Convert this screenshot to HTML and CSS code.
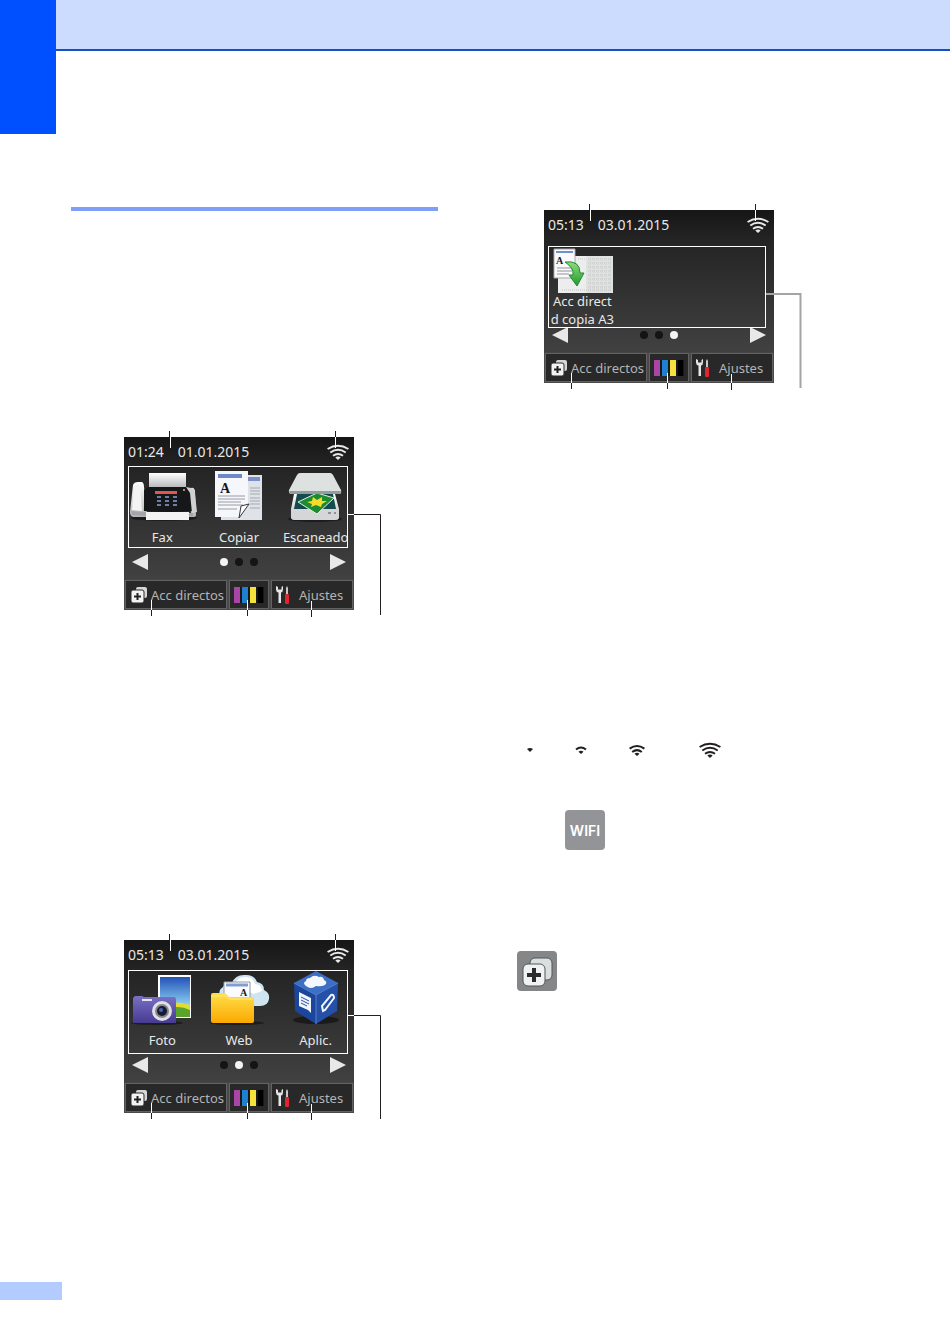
FILE: index.html
```html
<!DOCTYPE html>
<html lang="es">
<head>
    <meta charset="utf-8">
    <title>Pantalla LCD</title>
    <link rel="stylesheet" href="styles.css">
</head>
<body>
    <!-- shared icons -->
    <svg class="sprite" aria-hidden="true">
        <defs>
            <linearGradient id="silver" x1="0" y1="0" x2="0" y2="1">
                <stop offset="0" stop-color="#ffffff"/>
                <stop offset="1" stop-color="#b4b6b8"/>
            </linearGradient>
            <linearGradient id="yellow" x1="0" y1="0" x2="0" y2="1">
                <stop offset="0" stop-color="#ffdf4a"/>
                <stop offset="1" stop-color="#fba900"/>
            </linearGradient>
            <linearGradient id="purple" x1="0" y1="0" x2="0" y2="1">
                <stop offset="0" stop-color="#7a70c4"/>
                <stop offset="1" stop-color="#463a92"/>
            </linearGradient>
            <linearGradient id="sky" x1="0" y1="0" x2="0" y2="1">
                <stop offset="0" stop-color="#2452b8"/>
                <stop offset="1" stop-color="#8fd4f4"/>
            </linearGradient>
            <linearGradient id="green" x1="0" y1="0" x2="0" y2="1">
                <stop offset="0" stop-color="#8fdc7c"/>
                <stop offset="1" stop-color="#1e9a2c"/>
            </linearGradient>
        </defs>
        <symbol id="wifi" viewBox="0 0 22 16">
            <g fill="none" stroke="currentColor" stroke-width="2">
                <path d="M.600 5Q11-1.600 21.400 5"/>
                <path d="M3.300 8.500Q11 3.200 18.700 8.500"/>
                <path d="M6 11.800Q11 8.200 16 11.800"/>
            </g>
            <path d="M8.300 13.600Q11 11.400 13.700 13.600L11 16Z" fill="currentColor"/>
        </symbol>
        <symbol id="shortcut" viewBox="0 0 18 18">
            <rect x="6" y="1" width="11" height="11" rx="2" fill="#d6d6d6"/>
            <rect x="1" y="4" width="13" height="13" rx="2" fill="#f2f2f2" stroke="#2a2a2a"/>
            <path d="M7.500 7v7M4 10.500h7" stroke="#222" stroke-width="2"/>
        </symbol>
        <symbol id="ink" viewBox="0 0 30 16">
            <rect width="30" height="16" fill="#181818"/>
            <rect width="6" height="16" fill="#a945a5"/>
            <rect x="8" width="6" height="16" fill="#1f80d0"/>
            <rect x="16" width="6" height="16" fill="#f6e13c"/>
            <rect x="24" width="5" height="16" fill="#000"/>
        </symbol>
        <symbol id="tools" viewBox="0 0 14 18">
            <path d="M0 0v3.500Q0 6 2.500 6.500V17h2.500V6.500Q7 6 7 3.500V0L5.500 1v2.500h-3.500V1Z" fill="#e6e6e6"/>
            <path d="M11 0l1 2v6h-2V2Z" fill="#c8c8c8"/>
            <rect x="9" y="8" width="4" height="10" rx="1" fill="#e02430"/>
        </symbol>
        <symbol id="left" viewBox="0 0 17 16">
            <path d="M16 0V16L0 8Z" fill="#e8e8e8"/>
        </symbol>
        <symbol id="right" viewBox="0 0 17 16">
            <path d="M1 0V16L17 8Z" fill="#e8e8e8"/>
        </symbol>
    </svg>

    <header class="header">
        <div class="header-tab"></div>
        <div class="header-bar"></div>
    </header>

    <main class="content">
        <div class="column">
            <hr class="rule">

            <figure class="figure figure-home1">
                <div class="lcd">
                    <div class="status">
                        <span class="time">01:24</span>
                        <span class="date">01.01.2015</span>
                        <svg class="signal" width="22" height="16"><use href="#wifi"/></svg>
                    </div>
                    <div class="menu">
                        <a class="item" href="#fax">
                            <svg class="pic" viewBox="0 0 76 60">
                                <ellipse cx="40" cy="52" rx="33" ry="3" fill="#1c1c1c"/>
                                <path d="M25 7H62V22H25Z" fill="url(#silver)"/>
                                <path d="M6 46L9 19Q10 16 14 16H18Q20 17 20 21L23 46L67 47V22Q70 21 71 25L72 49Q72 51 69 51H9Q6 50 6 46Z" fill="url(#silver)"/>
                                <path d="M24 21H63Q66 22 67 26L69 45Q45 47 20 45V24Z" fill="#161719"/>
                                <path d="M62 21L67 22Q71 22 71 28L73 46L68 47L66 27Z" fill="#d0d1d3"/>
                                <path d="M8 44L10 21Q13 18 16 20L18 45Z" fill="#f4f4f4"/>
                                <path d="M31 25H53V28H31Z" fill="#e15555"/>
                                <path d="M33 31H37M41 31H45M49 31H53M33 35H37M41 35H45M49 35H53M33 39H37M41 39H45M49 39H53" stroke="#6e7fa6" stroke-width="2"/>
                                <circle cx="60" cy="24" r="1" fill="#e8b080"/>
                                <path d="M7 45L20 46L69 47V50Q40 52 8 49Z" fill="#a4a5a8"/>
                                <path d="M22 46H65V54H22Z" fill="#f4f4f4"/>
                            </svg>
                            <span class="label">Fax</span>
                        </a>
                        <a class="item" href="#copiar">
                            <svg class="pic" viewBox="0 0 76 60">
                                <path d="M28 9H61V54H20V50H28Z" fill="#dfe2e8"/>
                                <path d="M47 11H59V15H47Z" fill="#7d8fc9"/>
                                <path d="M49 22H59M49 25H59M49 28H59M49 32H59M49 35H59M49 38H59M49 42H59" stroke="#a4a8b0"/>
                                <path d="M14 5H47V40L38 51H14Z" fill="#f6f7fa"/>
                                <path d="M17 8H41V12H17Z" fill="#7186ca"/>
                                <text class="glyph" x="19" y="27">A</text>
                                <path d="M17 30H44M17 33H44M17 36H40M17 39H42M17 43H36" stroke="#989ca6"/>
                                <path d="M38 52L40 40L48 38Z" fill="#fff" stroke="#33363c"/>
                            </svg>
                            <span class="label">Copiar</span>
                        </a>
                        <a class="item" href="#escaneado">
                            <svg class="pic" viewBox="0 0 76 60">
                                <ellipse cx="37" cy="53" rx="27" ry="3" fill="#1c1c1c"/>
                                <path d="M16 28H57L61 43V51Q61 54 57 54H17Q13 54 13 51V43Z" fill="url(#silver)"/>
                                <path d="M19 28H55L58 43H16Z" fill="#134b4f"/>
                                <path d="M13 43H61V51Q61 54 57 54H17Q13 54 13 51Z" fill="#d4d6d8"/>
                                <path d="M20 36L39 27L56 32L39 48Z" fill="#1d8c31" stroke="#e3efe3"/>
                                <path d="M29 36L34 35L35 31L39 34L44 31L44 35L49 35L44 38L43 41L38 39L33 41L34 38Z" fill="#f4dc2c"/>
                                <path d="M50 47H53M56 47H58" stroke="#546"/>
                                <path d="M22 7H52Q54 7 55 9L63 24Q64 28 61 28H14Q10 28 11 24L19 9Q20 7 22 7Z" fill="#dde2e0"/>
                                <path d="M11 25H63Q63 28 61 28H14Q11 28 11 25Z" fill="#959c9a"/>
                            </svg>
                            <span class="label">Escaneado</span>
                        </a>
                    </div>
                    <div class="nav">
                        <button class="arrow" aria-label="Anterior"><svg width="17" height="16"><use href="#left"/></svg></button>
                        <div class="dots"><i class="dot on"></i><i class="dot"></i><i class="dot"></i></div>
                        <button class="arrow" aria-label="Siguiente"><svg width="17" height="16"><use href="#right"/></svg></button>
                    </div>
                    <div class="bar">
                        <button class="key"><svg width="18" height="18"><use href="#shortcut"/></svg>Acc directos</button>
                        <button class="key key-ink" aria-label="Tinta"><svg width="30" height="16"><use href="#ink"/></svg></button>
                        <button class="key key-set"><svg width="14" height="18"><use href="#tools"/></svg>Ajustes</button>
                    </div>
                </div>
                <svg class="callouts" viewBox="0 0 258 186">
                    <path class="out" d="M45.500 0V6M211.500 0V6M27.500 179V185M123.500 179V185M187.500 179V186M230 83.500H256.500V184"/>
                    <path class="in" d="M46.500 6V17M211.500 6V17M27.500 169V179M123.500 169V179M187.500 170V179M223 83.500H230"/>
                    <rect class="in" x="4.500" y="35.500" width="219" height="81"/>
                </svg>
            </figure>

            <figure class="figure figure-home2">
                <div class="lcd">
                    <div class="status">
                        <span class="time">05:13</span>
                        <span class="date">03.01.2015</span>
                        <svg class="signal" width="22" height="16"><use href="#wifi"/></svg>
                    </div>
                    <div class="menu">
                        <a class="item" href="#foto">
                            <svg class="pic" viewBox="0 0 76 60">
                                <ellipse cx="33" cy="54" rx="26" ry="2" fill="#1c1c1c"/>
                                <path d="M34 6H67V49H34Z" fill="#fff"/>
                                <path d="M36 8H66V37H36Z" fill="url(#sky)"/>
                                <path d="M36 35Q50 31 66 36V48H36Z" fill="#e3dc28"/>
                                <path d="M36 43Q52 34 66 41V48H36Z" fill="#5aa32c"/>
                                <path d="M9 29L11 27H18L20 28H50Q52 28 52 31V54H9Z" fill="url(#purple)"/>
                                <path d="M18 31H28" stroke="#e5e3f4" stroke-width="2"/>
                                <circle cx="38" cy="42" r="10" fill="#e0e0e4"/>
                                <circle cx="38" cy="42" r="7" fill="#85858f"/>
                                <circle cx="38" cy="42" r="5" fill="#181a30"/>
                                <circle cx="37" cy="41" r="2" fill="#4a64b0"/>
                            </svg>
                            <span class="label">Foto</span>
                        </a>
                        <a class="item" href="#web">
                            <svg class="pic" viewBox="0 0 76 60">
                                <ellipse cx="36" cy="54" rx="27" ry="2" fill="#1c1c1c"/>
                                <path d="M20 28Q16 22 22 18Q24 13 31 14Q34 6 43 6Q53 5 56 13Q63 14 63 21Q69 24 68 30Q67 37 59 37H44Z" fill="#cfe6f0"/>
                                <path d="M34 14Q38 7 45 8Q52 8 54 15Q61 16 61 22L52 25L45 20Z" fill="#fff"/>
                                <path d="M23 13H49V34H23Z" fill="#fbfbfd" stroke="#8f9aa8"/>
                                <path d="M25 16H47" stroke="#7f9ed6" stroke-width="3"/>
                                <text class="glyph glyph-small" x="39" y="27">A</text>
                                <path d="M10 26Q10 24 12 24H24L28 28H51Q53 28 53 30V52Q53 54 51 54H12Q10 54 10 52Z" fill="url(#yellow)"/>
                                <path d="M11 27H25L29 30H52" fill="none" stroke="#ffeb84"/>
                            </svg>
                            <span class="label">Web</span>
                        </a>
                        <a class="item" href="#aplic">
                            <svg class="pic" viewBox="0 0 76 60">
                                <ellipse cx="38" cy="51" rx="23" ry="4" fill="#1a1a1a"/>
                                <path d="M38 2L60 14L38 26L16 14Z" fill="#3d6fc6"/>
                                <path d="M16 14L38 26V55L17 42Z" fill="#1c469c"/>
                                <path d="M60 14L38 26V55L59 42Z" fill="#2450a8"/>
                                <path d="M16 14L38 26L60 14M38 26V55" fill="none" stroke="#5580cc"/>
                                <path d="M28 17Q24 14 28 12Q28 9 32 9Q36 5 41 8Q45 7 46 11Q50 13 47 16Q43 18 38 17Q33 21 28 17Z" fill="#f4f7fc"/>
                                <path d="M21 23L33 29V44L30 41L21 37Z" fill="#f1f4fb"/>
                                <path d="M23 28L31 32M23 31L31 35M23 34L29 37" stroke="#2450a8"/>
                                <path d="M45 42L44 37L53 26Q56 25 56 29L47 41Z" fill="none" stroke="#f1f4fb" stroke-width="2"/>
                            </svg>
                            <span class="label">Aplic.</span>
                        </a>
                    </div>
                    <div class="nav">
                        <button class="arrow" aria-label="Anterior"><svg width="17" height="16"><use href="#left"/></svg></button>
                        <div class="dots"><i class="dot"></i><i class="dot on"></i><i class="dot"></i></div>
                        <button class="arrow" aria-label="Siguiente"><svg width="17" height="16"><use href="#right"/></svg></button>
                    </div>
                    <div class="bar">
                        <button class="key"><svg width="18" height="18"><use href="#shortcut"/></svg>Acc directos</button>
                        <button class="key key-ink" aria-label="Tinta"><svg width="30" height="16"><use href="#ink"/></svg></button>
                        <button class="key key-set"><svg width="14" height="18"><use href="#tools"/></svg>Ajustes</button>
                    </div>
                </div>
                <svg class="callouts" viewBox="0 0 258 186">
                    <path class="out" d="M45.500 0V6M211.500 0V6M27.500 179V185M123.500 179V185M187.500 179V186M230 81.500H256.500V185"/>
                    <path class="in" d="M46.500 6V17M211.500 6V17M27.500 169V179M123.500 169V179M187.500 170V179M223 81.500H230"/>
                    <rect class="in" x="4.500" y="36.500" width="219" height="83"/>
                </svg>
            </figure>
        </div>

        <div class="column">
            <figure class="figure">
                <div class="lcd">
                    <div class="status">
                        <span class="time">05:13</span>
                        <span class="date">03.01.2015</span>
                        <svg class="signal" width="22" height="16"><use href="#wifi"/></svg>
                    </div>
                    <div class="menu">
                        <a class="item item-shortcut" href="#copia-a3">
                            <svg class="pic pic-wide" viewBox="0 0 76 47">
                                <path d="M14 11H69V48H14Z" fill="#eceded"/>
                                <path d="M42 11H69V48H42Z" fill="#e0e1e1"/>
                                <path d="M44 14H67M44 18H67M44 22H67M44 26H67M44 30H67M44 34H67M44 38H67M44 42H67M18 45H67M34 14H42" stroke="#c2c4c4" stroke-dasharray="1 1"/>
                                <path d="M46 13V46M50 13V46M54 13V46M58 13V46M62 13V46M66 13V46" stroke="#cccece" stroke-dasharray="1 1"/>
                                <path d="M10 4H31V33H10Z" fill="#fafafc" stroke="#a6a8ac"/>
                                <path d="M12 7H29" stroke="#6e90cc" stroke-width="2"/>
                                <text class="glyph glyph-small" x="12" y="19">A</text>
                                <path d="M13 23H28M13 26H28M13 29H25" stroke="#8f939a"/>
                                <path d="M21 17Q36 15 36 28H40L33 41L25 30H29Q30 23 21 17Z" fill="url(#green)" stroke="#218a30"/>
                            </svg>
                            <span class="label label-lines">Acc direct<br>d copia A3</span>
                        </a>
                    </div>
                    <div class="nav">
                        <button class="arrow" aria-label="Anterior"><svg width="17" height="16"><use href="#left"/></svg></button>
                        <div class="dots"><i class="dot"></i><i class="dot"></i><i class="dot on"></i></div>
                        <button class="arrow" aria-label="Siguiente"><svg width="17" height="16"><use href="#right"/></svg></button>
                    </div>
                    <div class="bar">
                        <button class="key"><svg width="18" height="18"><use href="#shortcut"/></svg>Acc directos</button>
                        <button class="key key-ink" aria-label="Tinta"><svg width="30" height="16"><use href="#ink"/></svg></button>
                        <button class="key key-set"><svg width="14" height="18"><use href="#tools"/></svg>Ajustes</button>
                    </div>
                </div>
                <svg class="callouts" viewBox="0 0 258 186">
                    <path class="out" d="M45.500 0V6M211.500 0V6M27.500 179V185M123.500 179V185M187.500 179V186"/>
                    <path class="gray" d="M222 90H256.500V184"/>
                    <path class="in" d="M46.500 6V17M211.500 6V17M27.500 169V179M123.500 169V179M187.500 170V179"/>
                    <rect class="in" x="4.500" y="42.500" width="217" height="81"/>
                </svg>
            </figure>

            <div class="levels">
                <svg width="6" height="4" viewBox="0 0 6 4"><path d="M0 1Q3-1 6 1L3 4Z" fill="#231f20"/></svg>
                <svg width="12" height="8" viewBox="0 0 12 8">
                    <path d="M1 3.500Q6-.500 11 3.500" fill="none" stroke="#231f20" stroke-width="2"/>
                    <path d="M3.500 5.800Q6 3.800 8.500 5.800L6 8Z" fill="#231f20"/>
                </svg>
                <svg width="16" height="12" viewBox="0 0 16 12">
                    <path d="M.600 4.600Q8-.800 15.400 4.600M3.200 8Q8 4.300 12.800 8" fill="none" stroke="#231f20" stroke-width="2"/>
                    <path d="M5.500 9.800Q8 7.600 10.500 9.800L8 12Z" fill="#231f20"/>
                </svg>
                <svg class="level-full" width="22" height="16"><use href="#wifi"/></svg>
            </div>

            <button class="tile tile-wifi">WIFI</button>

            <button class="tile tile-shortcut" aria-label="Acc directos">
                <svg width="40" height="40" viewBox="0 0 40 40">
                    <rect x="13" y="7" width="22" height="22" rx="5" fill="#d9dfdf" stroke="#555"/>
                    <rect x="6" y="13" width="22" height="22" rx="5" fill="#eef2f2" stroke="#555"/>
                    <path d="M17 17V31M10 24H24" stroke="#2b2b2e" stroke-width="4"/>
                </svg>
            </button>
        </div>
    </main>

    <footer class="footer"><div class="footer-tab"></div></footer>
</body>
</html>
```

FILE: styles.css
```css
* {
    box-sizing: border-box;
}
body {
    margin: 0;
    min-height: 100vh;
    display: flex;
    flex-direction: column;
    background: #fff;
    font-family: "Noto Sans", sans-serif;
}
.sprite {
    position: absolute;
    width: 0;
    height: 0;
}
button {
    margin: 0;
    padding: 0;
    border: 0;
    background: none;
    font-family: inherit;
    cursor: pointer;
}

/* page header */
.header {
    display: flex;
    align-items: flex-start;
}
.header-tab {
    width: 56px;
    height: 134px;
    background: #0050ff;
}
.header-bar {
    flex: 1;
    height: 51px;
    background: #ccdcff;
    border-bottom: 2px solid #1450c0;
}

.content {
    display: grid;
    grid-template-columns: 1fr 1fr;
    gap: 53px;
    padding: 70px 92px 0 71px;
}
.rule {
    height: 4px;
    margin: 3px 0 220px;
    border: 0;
    background: #7f9ff8;
}

/* screen with callout lines */
.figure {
    position: relative;
    width: 258px;
    margin: 0 0 0 53px;
    padding: 6px 28px 7px 0;
}
.figure-home2 {
    margin-top: 317px;
}
.callouts {
    position: absolute;
    left: 0;
    top: 0;
    width: 258px;
    height: 186px;
    fill: none;
    pointer-events: none;
}
.callouts .out {
    stroke: #231f20;
}
.callouts .in {
    stroke: #fff;
}
.callouts .gray {
    stroke: #a2a4a6;
    stroke-width: 2;
}

.lcd {
    padding-bottom: 1px;
    background: linear-gradient(#161616, #242424 30px, #414141 142px, #4a4a4a 143px, #4a4a4a);
    color: #e8e8e8;
}
.status {
    display: flex;
    align-items: center;
    height: 29px;
    padding: 0 5px 0 4px;
    font-size: 14px;
    line-height: 20px;
}
.time {
    margin-right: 14px;
}
.signal {
    margin-left: auto;
}
.menu {
    display: grid;
    grid-template-columns: 1fr 1fr 1fr;
    height: 88px;
}
.item {
    display: flex;
    flex-direction: column;
    align-items: center;
    color: inherit;
    text-decoration: none;
}
.pic {
    flex: none;
    width: 76px;
    height: 60px;
}
.pic-wide {
    height: 47px;
    overflow: visible;
}
.item-shortcut {
    padding-top: 6px;
}
.label {
    font-size: 13px;
    line-height: 22px;
    text-align: center;
    white-space: nowrap;
}
.label-lines {
    line-height: 18px;
}
.glyph {
    font: bold 14px "Liberation Serif", serif;
    fill: #16181c;
}
.glyph-small {
    font-size: 10px;
}

.nav {
    display: flex;
    align-items: center;
    justify-content: space-between;
    height: 16px;
    margin-bottom: 10px;
    padding: 0 8px;
}
.arrow,
.arrow svg {
    display: block;
    width: 17px;
    height: 16px;
}
.dots {
    display: flex;
    gap: 7px;
}
.dot {
    width: 8px;
    height: 8px;
    border-radius: 50%;
    background: #141414;
}
.dot.on {
    background: #f4f4f4;
}

.bar {
    display: grid;
    grid-template-columns: 102px 40px 1fr;
    gap: 2px;
    padding: 0 1px;
}
.key {
    display: flex;
    align-items: center;
    gap: 3px;
    height: 29px;
    padding-left: 4px;
    border: 1px solid #626262;
    background: #282828;
    color: #b4b4b4;
    font-size: 13px;
    white-space: nowrap;
}
.key svg {
    flex: none;
}
.key-set {
    gap: 9px;
}

/* signal levels */
.levels {
    display: flex;
    align-items: center;
    gap: 42px;
    margin-top: 352px;
    padding-left: 36px;
    color: #231f20;
}
.level-full {
    margin-left: 12px;
}

.tile {
    display: flex;
    align-items: center;
    justify-content: center;
    width: 40px;
    height: 40px;
    border-radius: 4px;
    background: #929497;
}
.tile-wifi {
    margin: 52px 0 0 74px;
    color: #fff;
    font: 600 14px Inter, sans-serif;
}
.tile-shortcut {
    margin: 101px 0 0 26px;
    background: #858688;
}

.footer {
    margin-top: auto;
    padding-bottom: 44px;
}
.footer-tab {
    width: 62px;
    height: 18px;
    background: #b3ccff;
}
```
